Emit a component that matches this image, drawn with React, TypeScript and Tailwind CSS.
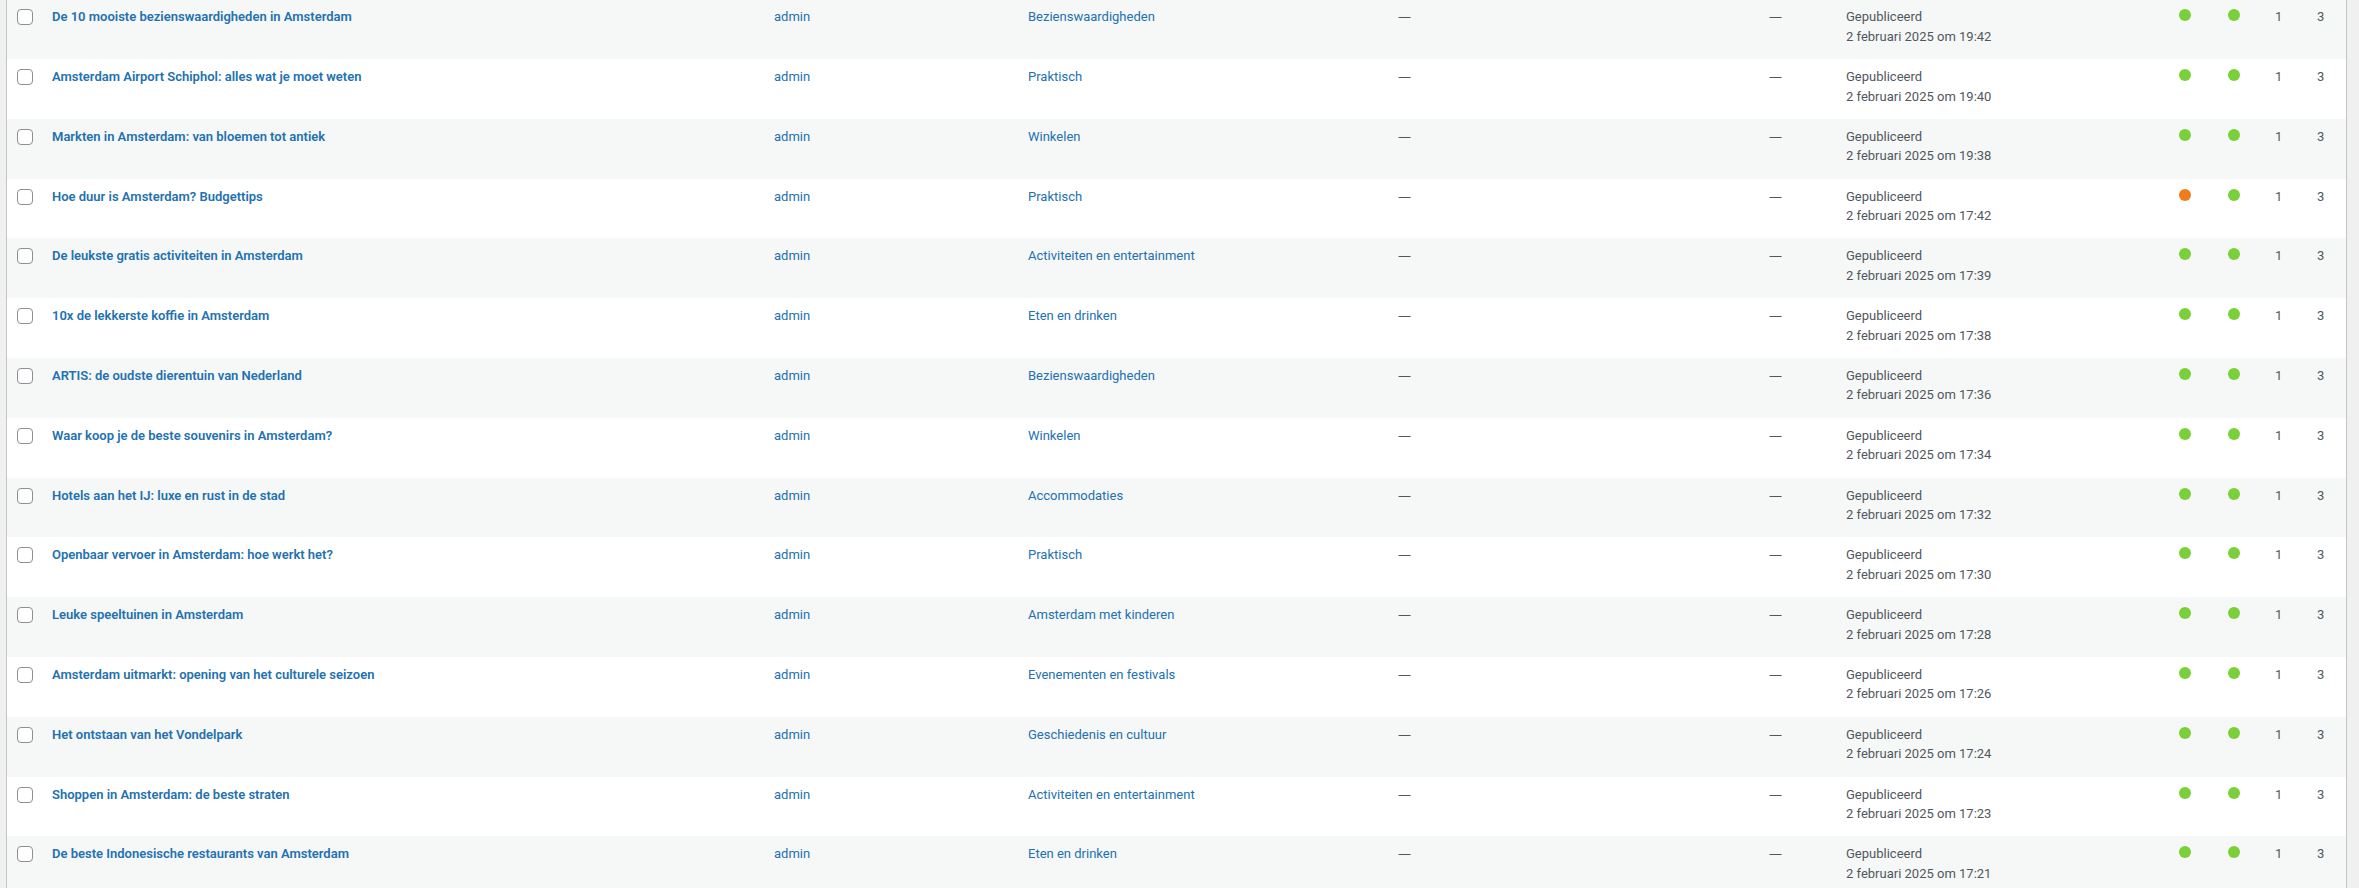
import React from 'react'

type Post = {
  title: string
  category: string
  time: string
  seo: 'good' | 'ok'
}

const posts: Post[] = [
  { title: 'De 10 mooiste bezienswaardigheden in Amsterdam', category: 'Bezienswaardigheden', time: '19:42', seo: 'good' },
  { title: 'Amsterdam Airport Schiphol: alles wat je moet weten', category: 'Praktisch', time: '19:40', seo: 'good' },
  { title: 'Markten in Amsterdam: van bloemen tot antiek', category: 'Winkelen', time: '19:38', seo: 'good' },
  { title: 'Hoe duur is Amsterdam? Budgettips', category: 'Praktisch', time: '17:42', seo: 'ok' },
  { title: 'De leukste gratis activiteiten in Amsterdam', category: 'Activiteiten en entertainment', time: '17:39', seo: 'good' },
  { title: '10x de lekkerste koffie in Amsterdam', category: 'Eten en drinken', time: '17:38', seo: 'good' },
  { title: 'ARTIS: de oudste dierentuin van Nederland', category: 'Bezienswaardigheden', time: '17:36', seo: 'good' },
  { title: 'Waar koop je de beste souvenirs in Amsterdam?', category: 'Winkelen', time: '17:34', seo: 'good' },
  { title: 'Hotels aan het IJ: luxe en rust in de stad', category: 'Accommodaties', time: '17:32', seo: 'good' },
  { title: 'Openbaar vervoer in Amsterdam: hoe werkt het?', category: 'Praktisch', time: '17:30', seo: 'good' },
  { title: 'Leuke speeltuinen in Amsterdam', category: 'Amsterdam met kinderen', time: '17:28', seo: 'good' },
  { title: 'Amsterdam uitmarkt: opening van het culturele seizoen', category: 'Evenementen en festivals', time: '17:26', seo: 'good' },
  { title: 'Het ontstaan van het Vondelpark', category: 'Geschiedenis en cultuur', time: '17:24', seo: 'good' },
  { title: 'Shoppen in Amsterdam: de beste straten', category: 'Activiteiten en entertainment', time: '17:23', seo: 'good' },
  { title: 'De beste Indonesische restaurants van Amsterdam', category: 'Eten en drinken', time: '17:21', seo: 'good' },
]

function Dot({ tone }: { tone: 'good' | 'ok' }) {
  return (
    <span
      className={`mt-[2px] ml-[3px] inline-block h-3 w-3 rounded-full ${
        tone === 'good' ? 'bg-[#7ad03a]' : 'bg-[#ee7c1b]'
      }`}
    />
  )
}

function Dash() {
  return <span className="font-['Noto_Sans',sans-serif]">—</span>
}

function Row({ post, index }: { post: Post; index: number }) {
  return (
    <div
      className={`flex h-[59.8px] text-[13px] leading-[19.5px] text-[#50575e] ${
        index % 2 === 0 ? 'bg-[#f6f7f7]' : 'bg-white'
      }`}
    >
      <div className="w-[35px] shrink-0 pl-[10px] pt-[10px]">
        <span className="block h-4 w-4 rounded-[4px] border border-[#8c8f94] bg-white" />
      </div>
      <div className="w-[722px] shrink-0 px-[10px] pt-2">
        <a className="font-semibold text-[#2271b1]">{post.title}</a>
      </div>
      <div className="w-[254px] shrink-0 px-[10px] pt-2">
        <a className="text-[#2271b1]">admin</a>
      </div>
      <div className="w-[370px] shrink-0 px-[10px] pt-2">
        <a className="text-[#2271b1]">{post.category}</a>
      </div>
      <div className="w-[371px] shrink-0 px-[10px] pt-2">
        <Dash />
      </div>
      <div className="w-[77px] shrink-0 px-[10px] pt-2">
        <Dash />
      </div>
      <div className="w-[330px] shrink-0 px-[10px] pt-2">
        Gepubliceerd
        <br />
        2 februari 2025 om {post.time}
      </div>
      <div className="w-[49px] shrink-0 px-[10px] pt-2">
        <Dot tone={post.seo} />
      </div>
      <div className="w-[50px] shrink-0 px-[10px] pt-2">
        <Dot tone="good" />
      </div>
      <div className="w-[42px] shrink-0 px-[10px] pt-2">1</div>
      <div className="flex-1 px-[10px] pt-2">3</div>
    </div>
  )
}

export default function App() {
  return (
    <div
      className="h-[888px] w-full overflow-hidden bg-[#f0f0f1] pl-[6px] pr-[12px]"
      style={{ fontFamily: 'Roboto, "Noto Sans", sans-serif' }}
    >
      <div className="-mt-[0.8px] border-x border-[#c3c4c7] bg-white">
        {posts.map((p, i) => (
          <Row key={i} post={p} index={i} />
        ))}
      </div>
    </div>
  )
}
